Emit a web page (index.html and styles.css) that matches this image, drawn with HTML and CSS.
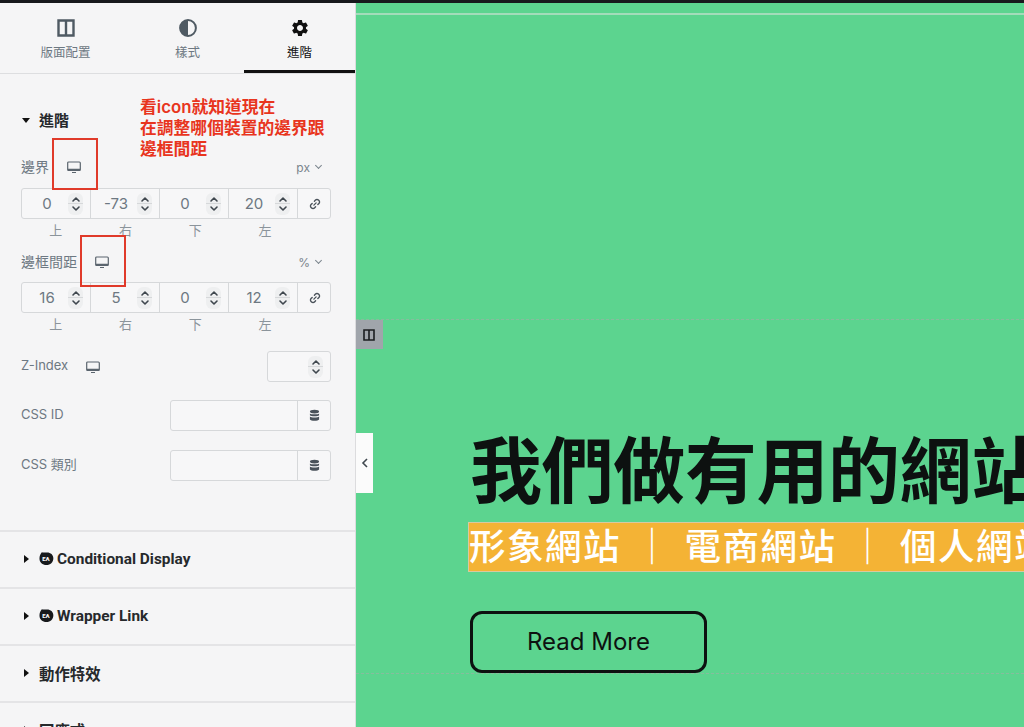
FILE: index.html
```html
<!DOCTYPE html>
<html lang="zh-Hant">
  <head>
    <meta charset="UTF-8" />
    <meta name="viewport" content="width=device-width, initial-scale=1.0" />
    <title>進階設定</title>
    <link rel="stylesheet" href="styles.css">
  </head>
  <body>
    <svg class="defs" width="0" height="0">
      <symbol id="monitor" viewBox="0 0 14 14">
        <path d="M1.6 2h10.8a.9.9 0 0 1 .9.9v6.7a.9.9 0 0 1-.9.9H1.6a.9.9 0 0 1-.9-.9V2.900a.9.9 0 0 1 .9-.9z" fill="none" stroke="currentColor" stroke-width="1.200"/>
        <path d="M.8 8.800h12.400v1.800H.8zM5 12h4v1.100H5z" fill="currentColor"/>
      </symbol>
      <symbol id="up-down" viewBox="0 0 10 20">
        <path d="M2 7l3-3 3 3M2 13l3 3 3-3" fill="none" stroke="currentColor" stroke-width="1.600" stroke-linecap="round" stroke-linejoin="round"/>
      </symbol>
      <symbol id="link" viewBox="0 0 14 14">
        <path d="M5.700 8.300l2.600-2.600M6.300 3.700l1.300-1.300a2.400 2.400 0 0 1 3.400 0l.6.600a2.400 2.400 0 0 1 0 3.400l-1.300 1.300M7.700 10.300l-1.300 1.300a2.400 2.400 0 0 1-3.400 0l-.6-.6a2.400 2.400 0 0 1 0-3.400l1.300-1.300" fill="none" stroke="currentColor" stroke-width="1.600" stroke-linecap="round"/>
      </symbol>
      <symbol id="database" viewBox="0 0 12 14">
        <ellipse cx="6" cy="2.700" rx="5" ry="2.100" fill="currentColor"/>
        <path d="M1 4.700c1 1.400 9 1.400 10 0v2.100c-1 1.500-9 1.500-10 0zM1 8.100c1 1.400 9 1.400 10 0v3.200c-1 1.900-9 1.900-10 0z" fill="currentColor"/>
      </symbol>
      <symbol id="columns" viewBox="0 0 18 18">
        <path d="M1.500 1.500h15v15h-15zM9 1.500v15" fill="none" stroke="currentColor" stroke-width="2.400"/>
      </symbol>
      <symbol id="ea" viewBox="0 0 16 16">
        <path d="M3 1.200c1.500.6 2.800.5 5 .3 4-.3 7.300 2 7.300 6.300 0 4.500-3.300 7.200-7.300 7.200-4.300 0-7.500-2.700-7.500-7 0-2.700.8-4.800 2.500-6.800z" fill="currentColor"/>
      </symbol>
    </svg>

    <div class="topbar"></div>
    <div class="app">
      <aside class="panel">
        <nav class="tabs">
          <div class="tab">
            <svg class="tab-icon" width="18" height="18"><use href="#columns"/></svg>
            <span>版面配置</span>
          </div>
          <div class="tab">
            <svg class="tab-icon" width="18" height="18" viewBox="0 0 18 18">
              <circle cx="9" cy="9" r="7.900" fill="none" stroke="currentColor" stroke-width="2"/>
              <path d="M9 1a8 8 0 0 0 0 16z" fill="currentColor"/>
            </svg>
            <span>樣式</span>
          </div>
          <div class="tab active">
            <svg class="tab-icon" width="20" height="20" viewBox="0 0 24 24">
              <path fill="currentColor" d="M19.140 12.940c.04-.3.06-.61.06-.94 0-.32-.02-.64-.07-.94l2.030-1.580a.49.49 0 0 0 .12-.61l-1.920-3.320a.488.488 0 0 0-.59-.22l-2.390.96c-.5-.38-1.030-.7-1.620-.94l-.36-2.540a.484.484 0 0 0-.48-.41h-3.840c-.24 0-.43.17-.47.41l-.36 2.540c-.59.24-1.130.57-1.620.94l-2.390-.96c-.22-.08-.47 0-.59.22L2.740 8.870c-.12.21-.08.47.12.61l2.030 1.580c-.05.3-.09.63-.09.94s.02.64.07.94l-2.030 1.580a.49.49 0 0 0-.12.61l1.920 3.320c.12.22.37.29.59.22l2.390-.96c.5.38 1.030.7 1.620.94l.36 2.540c.05.24.24.41.48.41h3.840c.24 0 .44-.17.47-.41l.36-2.540c.59-.24 1.130-.56 1.620-.94l2.390.96c.22.08.47 0 .59-.22l1.920-3.320c.12-.22.07-.47-.12-.61l-2.010-1.580zM12 15.600c-1.980 0-3.600-1.620-3.600-3.600s1.620-3.600 3.600-3.600 3.600 1.620 3.600 3.600-1.620 3.600-3.600 3.600z"/>
            </svg>
            <span>進階</span>
          </div>
        </nav>

        <section class="advanced">
          <h2 class="section-head"><span class="caret-down"></span>進階</h2>

          <div class="label-row first">
            <span class="label">邊界</span>
            <svg class="device" width="14" height="14"><use href="#monitor"/></svg>
            <span class="unit">px<i class="unit-arrow"></i></span>
          </div>
          <div class="quad">
            <div class="cell"><span class="num">0</span><span class="stepper"><svg width="10" height="20"><use href="#up-down"/></svg></span></div>
            <div class="cell"><span class="num">-73</span><span class="stepper"><svg width="10" height="20"><use href="#up-down"/></svg></span></div>
            <div class="cell"><span class="num">0</span><span class="stepper"><svg width="10" height="20"><use href="#up-down"/></svg></span></div>
            <div class="cell"><span class="num">20</span><span class="stepper"><svg width="10" height="20"><use href="#up-down"/></svg></span></div>
            <div class="cell addon"><svg width="12" height="12"><use href="#link"/></svg></div>
          </div>
          <div class="sides"><span>上</span><span>右</span><span>下</span><span>左</span></div>

          <div class="label-row">
            <span class="label">邊框間距</span>
            <svg class="device" width="14" height="14"><use href="#monitor"/></svg>
            <span class="unit">%<i class="unit-arrow"></i></span>
          </div>
          <div class="quad">
            <div class="cell"><span class="num">16</span><span class="stepper"><svg width="10" height="20"><use href="#up-down"/></svg></span></div>
            <div class="cell"><span class="num">5</span><span class="stepper"><svg width="10" height="20"><use href="#up-down"/></svg></span></div>
            <div class="cell"><span class="num">0</span><span class="stepper"><svg width="10" height="20"><use href="#up-down"/></svg></span></div>
            <div class="cell"><span class="num">12</span><span class="stepper"><svg width="10" height="20"><use href="#up-down"/></svg></span></div>
            <div class="cell addon"><svg width="12" height="12"><use href="#link"/></svg></div>
          </div>
          <div class="sides"><span>上</span><span>右</span><span>下</span><span>左</span></div>

          <div class="field field-z">
            <span class="field-label">Z-Index</span>
            <svg class="device" width="14" height="14"><use href="#monitor"/></svg>
            <div class="input input-z"><span class="stepper"><svg width="10" height="20"><use href="#up-down"/></svg></span></div>
          </div>
          <div class="field field-id">
            <span class="field-label">CSS ID</span>
            <div class="input input-wide"><div class="addon"><svg width="11" height="13"><use href="#database"/></svg></div></div>
          </div>
          <div class="field">
            <span class="field-label">CSS 類別</span>
            <div class="input input-wide"><div class="addon"><svg width="11" height="13"><use href="#database"/></svg></div></div>
          </div>

          <div class="note">看icon就知道現在<br>在調整哪個裝置的邊界跟<br>邊框間距</div>
          <div class="mark mark-margin"></div>
          <div class="mark mark-padding"></div>
        </section>

        <div class="fold"><span class="caret-right"></span><svg class="ea" width="15" height="15"><use href="#ea"/></svg><b class="ea-text">EA</b>Conditional Display</div>
        <div class="fold"><span class="caret-right"></span><svg class="ea" width="15" height="15"><use href="#ea"/></svg><b class="ea-text">EA</b>Wrapper Link</div>
        <div class="fold"><span class="caret-right"></span>動作特效</div>
        <div class="fold"><span class="caret-right"></span>回應式</div>
      </aside>

      <main class="canvas">
        <div class="block-top"></div>
        <section class="hero">
          <h1>我們做有用的網站</h1>
          <p class="services">形象網站 ｜ 電商網站 ｜ 個人網站</p>
          <a class="read-more">Read More</a>
        </section>

        <div class="handle">
          <svg width="8" height="12" viewBox="0 0 8 12"><path d="M6 2L2 6l4 4" fill="none" stroke="currentColor" stroke-width="1.600"/></svg>
        </div>
        <div class="column-tag"><svg width="12" height="12"><use href="#columns"/></svg></div>
      </main>
    </div>
  </body>
</html>
```

FILE: styles.css
```css
* {
  box-sizing: border-box;
}
html,
body {
  height: 100%;
}
body {
  margin: 0;
  overflow: hidden;
  font-family: Inter, "Noto Sans CJK TC", sans-serif;
  color: #6d7882;
  background-color: #5cd48f;
}
.defs {
  position: absolute;
}
.topbar {
  height: 3px;
  background-color: #17191c;
}
.app {
  display: flex;
  height: 724px;
}

/* left panel */
.panel {
  flex: none;
  width: 356px;
  height: 100%;
  overflow: hidden;
  position: relative;
  background-color: #f5f5f6;
  border-right: 1px solid #dcdcde;
}
.tabs {
  display: grid;
  grid-template-columns: 131px 113px 111px;
  height: 71px;
  border-bottom: 1px solid #dddee0;
}
.tab {
  display: flex;
  flex-direction: column;
  align-items: center;
  padding-top: 15px;
  height: 70px;
  font-size: 12.500px;
  line-height: 18px;
  color: #6d7882;
}
.tab-icon {
  height: 20px;
  margin-bottom: 6px;
  color: #4f5a63;
}
.tab.active {
  color: #111;
  border-bottom: 3px solid #111;
}
.tab.active .tab-icon {
  color: #111;
}

.advanced {
  position: relative;
  height: 458px;
  padding: 35px 24px 0 21px;
  border-bottom: 2px solid #e4e4e6;
}
.section-head {
  display: flex;
  align-items: center;
  margin: 0;
  height: 20px;
  font-size: 15px;
  font-weight: 700;
  color: #26292c;
}
.caret-down {
  width: 0;
  height: 0;
  margin: 2px 9px 0 1px;
  border-left: 4.500px solid transparent;
  border-right: 4.500px solid transparent;
  border-top: 5px solid #111;
}
.caret-right {
  width: 0;
  height: 0;
  margin: 0 10px 0 2px;
  border-top: 4.500px solid transparent;
  border-bottom: 4.500px solid transparent;
  border-left: 5px solid #111;
}
.label-row {
  display: flex;
  align-items: center;
  height: 20px;
  margin-top: 14px;
}
.label-row.first {
  margin-top: 28px;
}
.label {
  font-size: 14px;
  line-height: 20px;
  color: #6d7882;
}
.field-label {
  padding-bottom: 3px;
  font-size: 13px;
  line-height: 20px;
  color: #6d7882;
}
.device {
  margin-left: 18px;
  color: #5b656e;
}
.unit {
  display: flex;
  align-items: center;
  margin-left: auto;
  margin-right: 9px;
  font-size: 12px;
  color: #7a848c;
}
.unit-arrow {
  width: 5px;
  height: 5px;
  margin: -3px 1px 0 6px;
  border-right: 1px solid #7a848c;
  border-bottom: 1px solid #7a848c;
  transform: rotate(45deg);
}
.quad {
  display: grid;
  grid-template-columns: 69px 69px 69px 69px 34px;
  height: 31px;
  margin-top: 10px;
  background-color: #f7f7f8;
  border: 1px solid #d6d8da;
  border-radius: 3px;
}
.label-row.first + .quad {
  margin-top: 11px;
}
.cell {
  display: flex;
  align-items: center;
  justify-content: space-between;
  padding: 0 7px 0 4px;
  border-right: 1px solid #d6d8da;
}
.cell.addon {
  justify-content: center;
  padding: 0;
  border-right: 0;
  color: #4a525a;
}
.num {
  flex: 1;
  text-align: center;
  font-size: 15px;
  color: #6d7882;
}
.stepper {
  display: flex;
  justify-content: center;
  align-items: center;
  width: 15px;
  height: 22px;
  color: #3f474e;
  background: linear-gradient(#eeeff0 10px, #d6d8da 10px, #d6d8da 11px, #eeeff0 11px);
  border-radius: 6px;
}
.sides {
  display: grid;
  grid-template-columns: repeat(4, 69.700px);
  height: 16px;
  margin-top: 3px;
  text-align: center;
  font-size: 13px;
  line-height: 16px;
  color: #8b949b;
}
.field {
  display: flex;
  align-items: center;
  height: 31px;
  margin-top: 19px;
}
.field-id {
  margin-top: 18px;
}
.input {
  display: flex;
  align-items: center;
  justify-content: flex-end;
  margin-left: auto;
  height: 31px;
  background-color: #f7f7f8;
  border: 1px solid #d6d8da;
  border-radius: 3px;
}
.input-z {
  width: 64px;
  padding-right: 7px;
}
.input-wide {
  width: 161px;
}
.input .addon {
  display: flex;
  align-items: center;
  justify-content: center;
  width: 33px;
  height: 100%;
  color: #4a525a;
  border-left: 1px solid #d6d8da;
}

/* red annotations drawn over the panel */
.note {
  position: absolute;
  left: 140px;
  top: 23px;
  font-size: 16.800px;
  line-height: 21px;
  font-weight: 600;
  white-space: nowrap;
  color: #e8351e;
}
.mark {
  position: absolute;
  width: 46px;
  height: 52px;
  border: 2px solid #e03a2a;
}
.mark-margin {
  left: 52px;
  top: 64px;
}
.mark-padding {
  left: 80px;
  top: 161px;
}

.fold {
  display: flex;
  align-items: center;
  position: relative;
  height: 57px;
  padding: 0 0 2px 22px;
  font-family: Roboto, "Noto Sans CJK TC", sans-serif;
  font-size: 15.400px;
  font-weight: 700;
  color: #26292c;
  border-bottom: 2px solid #e4e4e6;
}
.ea {
  margin-right: 3px;
  color: #17191c;
}
.ea-text {
  position: absolute;
  left: 41px;
  top: 22px;
  width: 10px;
  font-size: 6px;
  line-height: 9px;
  text-align: center;
  color: #f5f5f6;
}

/* page preview */
.canvas {
  flex: 1;
  min-width: 0;
  position: relative;
  overflow: hidden;
  background-color: #5cd48f;
}
.block-top {
  height: 307px;
  margin-top: 10px;
  border-top: 2px solid #a3dcba;
  border-bottom: 1px dashed #86bd9d;
}
.hero {
  height: 354px;
  padding: 111px 0 0 114px;
  white-space: nowrap;
  border-bottom: 1px dashed #86bd9d;
}
.hero h1 {
  margin: 0;
  height: 80px;
  font-size: 72px;
  line-height: 80px;
  font-weight: 700;
  letter-spacing: -0.400px;
  color: #0d1110;
}
.services {
  width: 560px;
  height: 50px;
  margin: 11px 0 0 -2px;
  font-size: 36.500px;
  line-height: 48px;
  font-weight: 500;
  letter-spacing: 1.500px;
  word-spacing: 1.500px;
  color: #fff;
  background-color: #f4b335;
  border: 1px solid #d8c9a0;
  border-right: 0;
}
.read-more {
  display: flex;
  align-items: center;
  justify-content: center;
  width: 237px;
  height: 62px;
  margin-top: 39px;
  padding-bottom: 1px;
  font-size: 24px;
  color: #0d1110;
  border: 3px solid #0d1110;
  border-radius: 12px;
}
.handle {
  display: flex;
  align-items: center;
  justify-content: center;
  position: absolute;
  left: 0;
  top: 430px;
  width: 17px;
  height: 60px;
  color: #3f474e;
  background-color: #fbfbfb;
}
.column-tag {
  display: flex;
  align-items: center;
  justify-content: center;
  position: absolute;
  left: 0;
  top: 317px;
  width: 27px;
  height: 29px;
  padding-right: 2px;
  color: #1b1e21;
  background-color: #a0a5ab;
}
```
